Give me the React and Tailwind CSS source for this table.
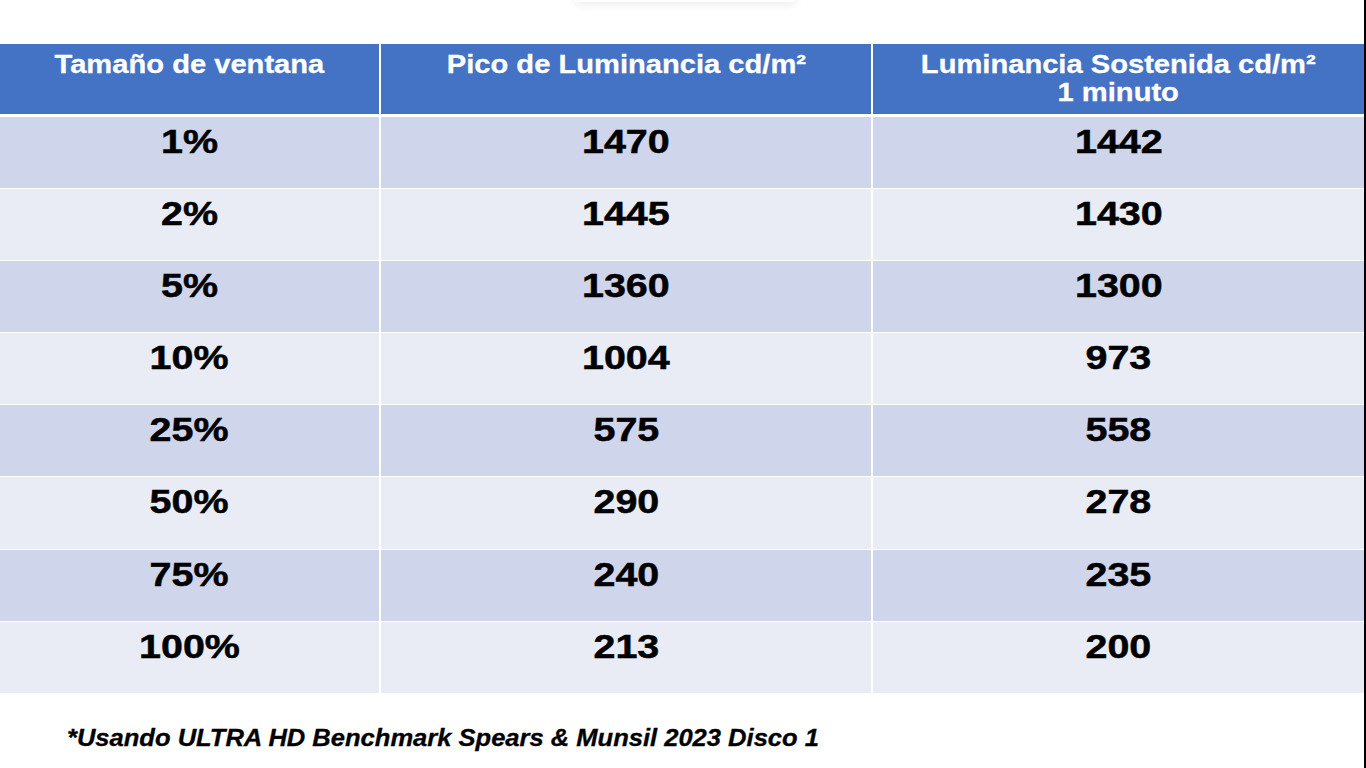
import React from "react";

const rows = [
  ["1%", "1470", "1442"],
  ["2%", "1445", "1430"],
  ["5%", "1360", "1300"],
  ["10%", "1004", "973"],
  ["25%", "575", "558"],
  ["50%", "290", "278"],
  ["75%", "240", "235"],
  ["100%", "213", "200"],
];

function HeadCell({ children }) {
  return (
    <div className="bg-[#4472C4] text-white font-bold text-[26px] leading-[28px] text-center pt-[6px]">
      <span className="inline-block scale-x-[1.12] [-webkit-text-stroke:0.3px_white]">{children}</span>
    </div>
  );
}

export default function App() {
  const font = { fontFamily: '"Liberation Sans", Arial, sans-serif' };
  return (
    <div className="relative w-[1366px] h-[768px] bg-white overflow-hidden flex" style={font}>
      <div className="absolute left-[575px] -top-[14px] w-[220px] h-[16px] bg-white shadow-[0_3px_10px_rgba(0,0,0,0.07)]" />
      <div className="w-[1364px] flex flex-col">
        <div className="h-[44px]" />
        <div className="flex flex-col">
          <div className="grid grid-cols-[379px_490px_491px] gap-x-[2px] h-[70px] mb-[3px]">
            <HeadCell>Tamaño de ventana</HeadCell>
            <HeadCell>Pico de Luminancia cd/m²</HeadCell>
            <HeadCell>
              Luminancia Sostenida cd/m²
              <br />1 minuto
            </HeadCell>
          </div>
          <div className="flex flex-col gap-y-px">
            {rows.map((r, i) => (
              <div key={i} className="grid grid-cols-[379px_490px_491px] gap-x-[2px] h-[71.1px]">
                {r.map((c, j) => (
                  <div
                    key={j}
                    className={`${i % 2 === 0 ? "bg-[#CFD5EA]" : "bg-[#E9EBF5]"} text-black font-bold text-[34px] leading-none text-center pt-[7px]`}
                  >
                    <span className="inline-block scale-x-[1.16] [-webkit-text-stroke:0.5px_black]">{c}</span>
                  </div>
                ))}
              </div>
            ))}
          </div>
        </div>
        <div className="pl-[67px] pt-[34px] text-black font-bold italic text-[23px] leading-none">
          <span className="inline-block origin-left scale-x-[1.11] [-webkit-text-stroke:0.3px_black]">
            *Usando ULTRA HD Benchmark Spears &amp; Munsil 2023 Disco 1
          </span>
        </div>
      </div>
      <div className="w-[2px] bg-black" />
    </div>
  );
}
